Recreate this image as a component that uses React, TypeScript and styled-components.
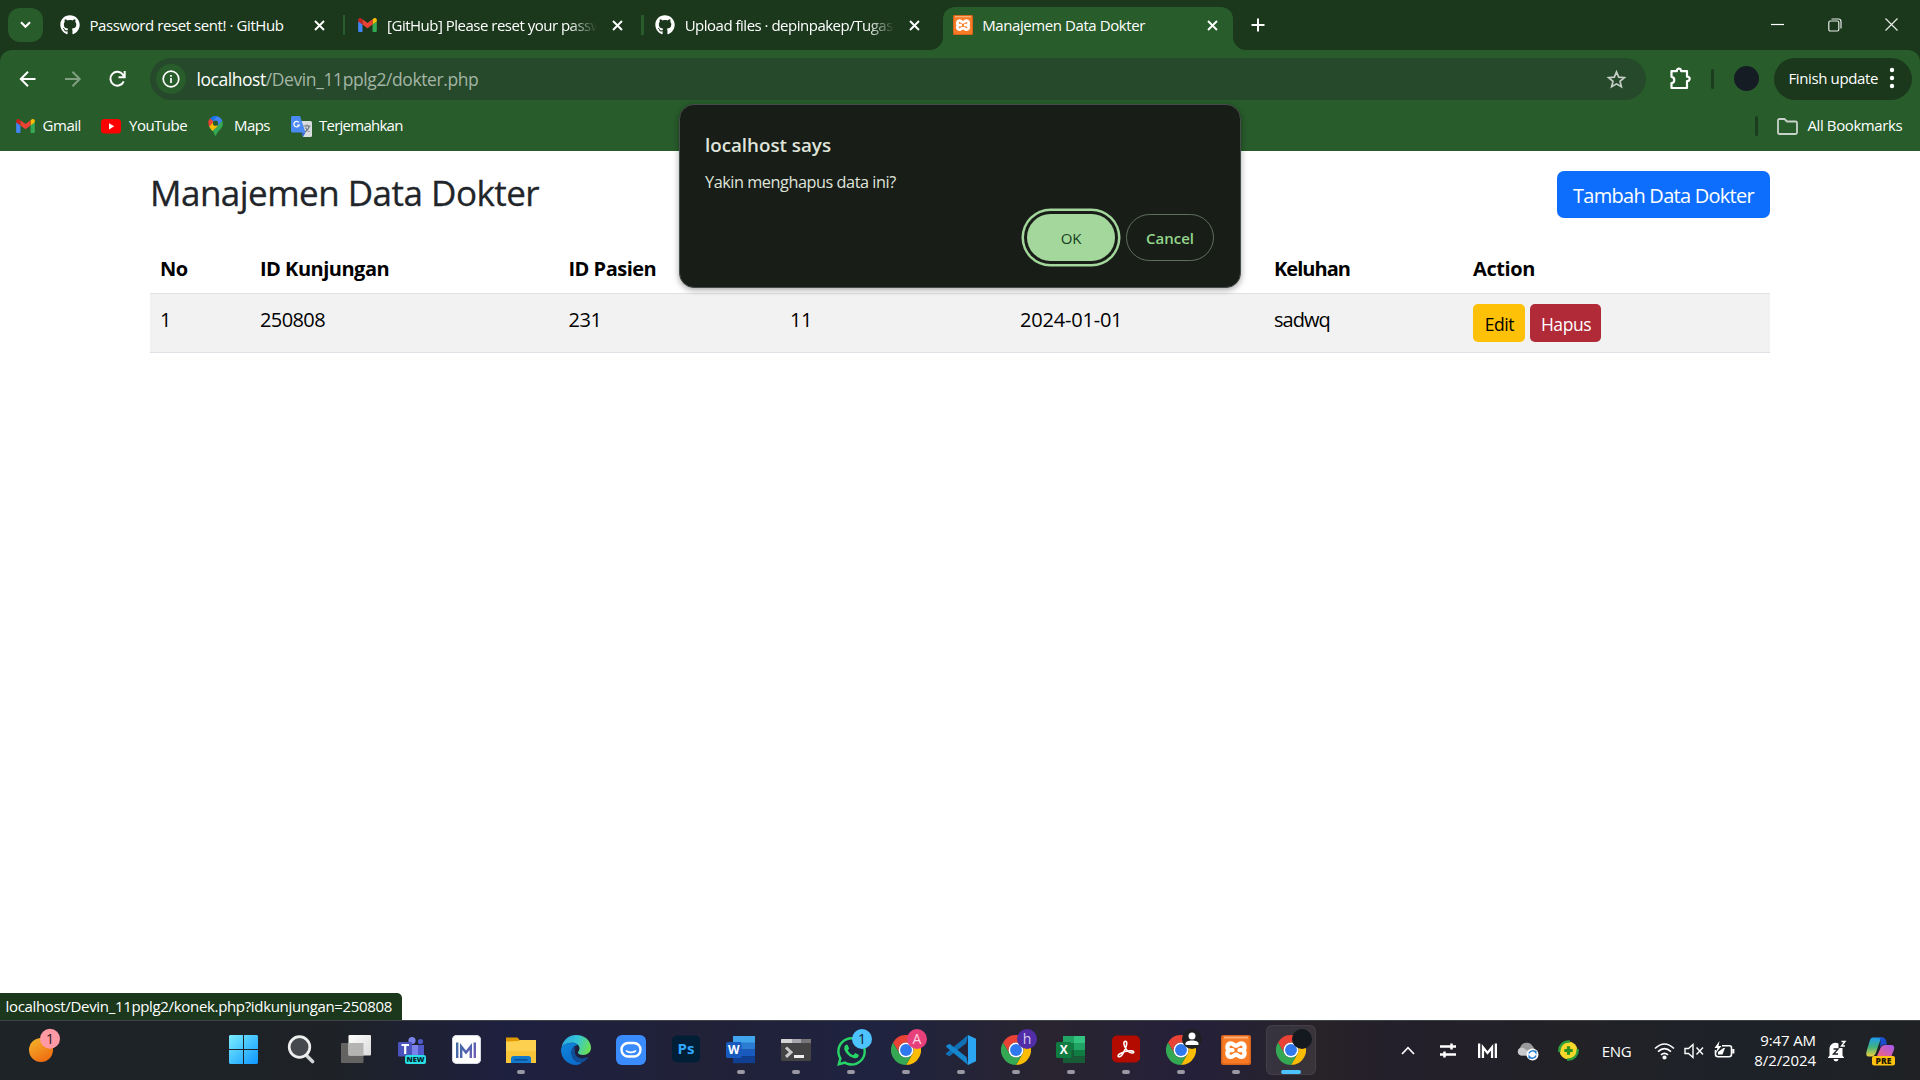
import React from "react";
import styled, { createGlobalStyle, css } from "styled-components";
import { FaGithub, FaWhatsapp } from "react-icons/fa";

const Global = createGlobalStyle`
  * { box-sizing: border-box; }
  body { margin: 0; background: #fff; overflow: hidden; }
  svg { display: block; flex: none; }
`;

const c = {
  frame: "#1b381c",
  bar: "#285c2b",
  omni: "#27492b",
  dialog: "#191d18",
  accent: "#a4d79c",
};

const Screen = styled.div`
  position: relative;
  display: flex;
  flex-direction: column;
  width: 1920px;
  height: 1080px;
  font-family: "Open Sans", "Noto Sans", sans-serif;
  background: #fff;
`;

const Text = styled.span<{ $size?: number; $track?: number; $color?: string; $weight?: number }>`
  font-size: ${(p) => p.$size ?? 15}px;
  letter-spacing: ${(p) => p.$track ?? -0.42}px;
  color: ${(p) => p.$color ?? "#fff"};
  font-weight: ${(p) => p.$weight ?? 400};
  line-height: 24px;
  white-space: pre;
  flex: none;
`;

/* ---------- tab strip ---------- */
const TabStrip = styled.div`
  display: flex;
  height: 50px;
  background: ${c.frame};
  padding-left: 8px;
`;
const TabSearch = styled.div`
  display: flex;
  align-items: center;
  justify-content: center;
  width: 35px;
  height: 34px;
  margin: 8px 7px 0 0;
  border-radius: 12px;
  background: ${c.bar};
`;
const Tab = styled.div<{ $active?: boolean }>`
  position: relative;
  display: flex;
  align-items: center;
  width: 290px;
  height: 43px;
  margin-top: 7px;
  padding: 0 15px 7px 10px;
  border-radius: 12px 12px 0 0;
  background: ${(p) => (p.$active ? c.bar : "transparent")};
  ${(p) =>
    p.$active &&
    css`
      &::before,
      &::after {
        content: "";
        position: absolute;
        bottom: 0;
        width: 13px;
        height: 13px;
      }
      &::before {
        left: -13px;
        background: radial-gradient(circle at 0 0, transparent 12.5px, ${c.bar} 13.5px);
      }
      &::after {
        right: -13px;
        background: radial-gradient(circle at 100% 0, transparent 12.5px, ${c.bar} 13.5px);
      }
    `}
`;
const Favicon = styled.div`
  display: flex;
  justify-content: center;
  width: 20px;
  margin-right: 9.500px;
  color: #fff;
`;
const TabTitle = styled.div<{ $fade?: boolean }>`
  width: 208.500px;
  height: 24px;
  margin-right: 16px;
  overflow: hidden;
  ${(p) => p.$fade && css`mask-image: linear-gradient(90deg, #000 182px, transparent 210px);`}
`;
const TabGap = styled.div<{ $line?: boolean }>`
  width: 7.6px;
  height: 20px;
  margin-top: 15px;
  background: ${(p) => (p.$line ? `linear-gradient(90deg, transparent 3px, ${c.bar} 3px, ${c.bar} 5.5px, transparent 5.5px)` : "none")};
`;
const NewTab = styled.div`
  display: flex;
  align-items: center;
  width: 20px;
  height: 50px;
  margin-left: 18px;
`;
const WindowControls = styled.div`
  display: flex;
  align-items: center;
  gap: 43.5px;
  height: 49px;
  margin-left: auto;
  padding-right: 22px;
`;

/* ---------- toolbar ---------- */
const ToolbarWrap = styled.div`
  background: ${c.frame};
`;
const Toolbar = styled.div`
  display: flex;
  align-items: center;
  height: 58px;
  padding: 0 8px 0 16px;
  border-radius: 12px 12px 0 0;
  background: ${c.bar};
`;
const NavIcons = styled.div`
  display: flex;
  gap: 21px;
  width: 134px;
`;
const Omnibox = styled.div`
  display: flex;
  align-items: center;
  width: 1496px;
  height: 42px;
  padding: 0 19px 0 6px;
  border-radius: 21px;
  background: ${c.omni};
`;
const SiteInfo = styled.div`
  display: flex;
  align-items: center;
  justify-content: center;
  width: 30px;
  height: 30px;
  margin-right: 10.5px;
  border-radius: 50%;
  background: ${c.bar};
`;
const Spacer = styled.div`
  flex: 1;
`;
const VLine = styled.div<{ $ml: number; $mr: number }>`
  width: 2.5px;
  height: 20px;
  margin: 0 ${(p) => p.$mr}px 0 ${(p) => p.$ml}px;
  border-radius: 2px;
  background: #1b3c1e;
`;
const Avatar = styled.div`
  width: 25px;
  height: 25px;
  margin-bottom: 1px;
  border-radius: 50%;
  background: #151c24;
`;
const UpdatePill = styled.div`
  display: flex;
  align-items: center;
  justify-content: space-between;
  width: 138px;
  height: 42px;
  margin-left: 15px;
  padding: 0 15px 2px;
  border-radius: 21px;
  background: ${c.frame};
`;

const BookmarkBar = styled.div`
  display: flex;
  align-items: center;
  height: 43px;
  padding: 0 18px 7px 16px;
  background: ${c.bar};
`;
const Bookmark = styled.div<{ $w: number; $gap?: number }>`
  display: flex;
  align-items: center;
  gap: ${(p) => p.$gap ?? 8}px;
  width: ${(p) => p.$w}px;
  ${Text} {
    margin-top: -2px;
  }
`;

/* ---------- page ---------- */
const Page = styled.main`
  flex: 1;
  padding: 20px 150px 0;
`;
const PageHead = styled.div`
  display: flex;
  justify-content: space-between;
  height: 73px;
`;
const Title = styled.h3`
  margin: 1px 0 0;
  font-size: 35px;
  line-height: 42px;
  font-weight: 500;
  letter-spacing: -0.52px;
  -webkit-text-stroke: 0.3px #212529;
  color: #212529;
`;
const PrimaryButton = styled.button`
  width: 213px;
  height: 47px;
  padding: 0;
  border: 0;
  border-radius: 7px;
  background: #0d6efd;
  color: #fff;
  font: 400 20px/50px "Open Sans", sans-serif;
  letter-spacing: -0.74px;
`;
const Table = styled.table`
  width: 1620px;
  table-layout: fixed;
  border-collapse: collapse;
  font-size: 20px;
  line-height: 30px;
  color: #000;
`;
const Col = styled.col<{ $w: number }>`
  width: ${(p) => p.$w}px;
`;
const Head = styled.th<{ $track?: number }>`
  height: 49px;
  padding: 10px 10px 9px;
  text-align: left;
  font-weight: 700;
  letter-spacing: ${(p) => p.$track ?? -0.5}px;
  border-bottom: 1px solid #dee2e6;
`;
const Cell = styled.td<{ $track?: number; $top?: number }>`
  height: 59px;
  padding: ${(p) => p.$top ?? 11}px 10px 8px;
  vertical-align: top;
  background: #f2f2f2;
  letter-spacing: ${(p) => p.$track ?? -0.6}px;
  border-bottom: 1px solid #dee2e6;
`;
const Actions = styled.div`
  display: flex;
  gap: 5px;
`;
const SmallButton = styled.button<{ $bg: string; $fg: string; $w: number }>`
  width: ${(p) => p.$w}px;
  height: 38px;
  padding: 0 0 0 1px;
  border: 0;
  border-radius: 5px;
  background: ${(p) => p.$bg};
  color: ${(p) => p.$fg};
  font: 400 17.5px/40px "Open Sans", sans-serif;
  letter-spacing: -0.45px;
`;

/* ---------- overlays ---------- */
const Dialog = styled.div`
  position: absolute;
  left: 679px;
  top: 104px;
  width: 562px;
  height: 184px;
  padding: 28px 26px 26px 25px;
  display: flex;
  flex-direction: column;
  border: 1px solid #454c4c;
  border-radius: 15px;
  background: ${c.dialog};
  box-shadow: 0 2px 6px rgba(0, 0, 0, 0.35);
`;
const DialogMessage = styled.div`
  margin-top: 13px;
  height: 24px;
`;
const DialogButtons = styled.div`
  display: flex;
  justify-content: flex-end;
  gap: 11px;
  margin-top: 20px;
`;
const PillButton = styled.button<{ $primary?: boolean }>`
  width: 88px;
  height: 47px;
  padding: 0;
  border-radius: 24px;
  font: ${(p) => (p.$primary ? 500 : 600)} 15px "Open Sans", sans-serif;
  letter-spacing: ${(p) => (p.$primary ? -0.2 : 0)}px;
  border: ${(p) => (p.$primary ? "0" : "1px solid #60705e")};
  background: ${(p) => (p.$primary ? c.accent : "transparent")};
  color: ${(p) => (p.$primary ? "#17401d" : "#93d68c")};
  ${(p) => p.$primary && css`box-shadow: 0 0 0 3px ${c.dialog}, 0 0 0 5.5px ${c.accent};`}
`;
const StatusBubble = styled.div`
  position: absolute;
  left: 0;
  top: 993px;
  width: 402px;
  height: 27px;
  padding: 1px 0 0 5.5px;
  border-radius: 0 5px 0 0;
  background: ${c.frame};
`;

/* ---------- taskbar ---------- */
const Taskbar = styled.footer`
  display: flex;
  height: 60px;
  border-top: 1px solid #3f4448;
  background: linear-gradient(90deg, #1e2327 0, #1e2226 330px, #1e2040 510px, #212138 700px, #1f2340 880px, #29242f 1050px, #25203a 1190px, #282328 1320px, #231f2b 1400px, #222126 1560px, #1d2228 1740px, #1f2124 1920px);
`;
const Weather = styled.div`
  width: 216px;
  padding: 7px 0 0 28px;
`;
const TaskItem = styled.div<{ $active?: boolean; $first?: boolean }>`
  position: relative;
  display: flex;
  justify-content: center;
  width: 50px;
  height: 50px;
  margin: 4px ${(p) => (p.$first ? 5 : 2.5)}px 0 2.5px;
  padding-top: 10px;
  border-radius: 6px;
  ${(p) => p.$active && css`background: rgba(255, 255, 255, 0.08); box-shadow: inset 0 0 0 1px rgba(255, 255, 255, 0.06);`}
`;
const Indicator = styled.i<{ $active?: boolean }>`
  position: absolute;
  bottom: 1px;
  width: ${(p) => (p.$active ? 20 : 8)}px;
  height: 4px;
  border-radius: 2px;
  background: ${(p) => (p.$active ? "#4cc2ff" : "#9a98a2")};
`;
const Badge = styled.span<{ $bg: string; $fg: string }>`
  position: absolute;
  left: 26px;
  top: 4px;
  width: 20px;
  height: 20px;
  border-radius: 50%;
  background: ${(p) => p.$bg};
  color: ${(p) => p.$fg};
  font-size: 14px;
  line-height: 20px;
  text-align: center;
`;
const Tray = styled.div`
  display: flex;
  align-items: center;
  margin-left: auto;
  padding-right: 24px;
`;
const TraySlot = styled.div<{ $w: number; $mr?: number }>`
  display: flex;
  justify-content: center;
  width: ${(p) => p.$w}px;
  margin-right: ${(p) => p.$mr ?? 0}px;
`;
const Clock = styled.div`
  width: 80.5px;
  margin-top: -2px;
  text-align: right;
  color: #fff;
  font-size: 15px;
  line-height: 20px;
  letter-spacing: -0.1px;
`;

/* ---------- drawings ---------- */
const Close = () => (
  <svg width="11" height="11" viewBox="0 0 11 11" stroke="#fff" strokeWidth="1.9"><path d="M1 1l9 9M10 1l-9 9" /></svg>
);
const Gmail = () => (
  <svg width="19" height="14" viewBox="0 0 24 18">
    <path fill="#4285f4" d="M0 4v12.400C0 17.300.7 18 1.600 18H5.500V8z" />
    <path fill="#34a853" d="M24 4v12.400c0 .9-.7 1.600-1.600 1.600H18.500V8z" />
    <path fill="#c5221f" d="M0 4.200V2.500C0 .4 2.400-.8 4.100.5l1.400 1V8.300z" />
    <path fill="#fbbc04" d="M24 4.200V2.500c0-2.100-2.400-3.300-4.100-2l-1.400 1v6.800z" />
    <path fill="#ea4335" d="M5.500 8.300V1.500L12 6.400l6.500-4.900v6.800L12 13.200z" />
  </svg>
);
const XamppIcon = ({ s }: { s: number }) => (
  <svg width={s} height={s} viewBox="0 0 30 30">
    <rect width="30" height="30" rx="2" fill="#d9651c" />
    <rect x="1.500" y="1.500" width="27" height="27" rx="2" fill="#f97b25" />
    <path d="M3 2.500h24" stroke="#fbb27c" strokeWidth="1.800" />
    <g fill="none" stroke="#fff" strokeWidth="4.300" strokeLinejoin="round" strokeLinecap="round">
      <path d="M11.500 15.200H7.800c-2-1.600-2-6.200 1.500-6.700 3-.4 3.800 2.300 5.700 2.300s2.700-2.700 5.700-2.300c3.500.5 3.500 5.100 1.500 6.700 2 1.600 2 6.200-1.500 6.700-3 .4-3.800-2.300-5.700-2.300s-2.700 2.700-5.700 2.300c-3.500-.5-3.500-5.100-1.500-6.700" />
      <path d="M18.500 15.200h3.700" />
    </g>
  </svg>
);
const Chrome = () => (
  <svg width="30" height="30" viewBox="0 0 48 48">
    <path fill="#ea4335" d="M3.200 12A24 24 0 0 1 44.800 12H24a12 12 0 0 0-10.400 18z" />
    <path fill="#fbbc04" d="M44.800 12A24 24 0 0 1 24 48l10.400-18A12 12 0 0 0 24 12z" />
    <path fill="#34a853" d="M24 48A24 24 0 0 1 3.200 12l10.400 18a12 12 0 0 0 20.800 0z" />
    <circle cx="24" cy="24" r="12" fill="#fff" />
    <circle cx="24" cy="24" r="9.500" fill="#2f78ee" />
  </svg>
);
const WordIcon = () => (
  <svg width="30" height="30" viewBox="0 0 30 30">
    {["#41a5ee", "#2b7cd3", "#185abd", "#103f91"].map((f, i) => <rect key={f} x="7" y={1 + i * 6.75} width="22" height="6.900" fill={f} />)}
    <rect x="0" y="7" width="15.500" height="16" rx="1.500" fill="#185abd" />
    <text x="7.700" y="19.300" fill="#fff" fontSize="12" fontWeight="700" textAnchor="middle" fontFamily="Open Sans">W</text>
  </svg>
);
const ExcelIcon = () => (
  <svg width="30" height="30" viewBox="0 0 30 30">
    <path fill="#21a366" d="M7 1h11v7H7z" /><path fill="#33c481" d="M18 1h11v7H18z" />
    <path fill="#107c41" d="M7 8h11v7H7z" /><path fill="#21a366" d="M18 8h11v7H18z" />
    <path fill="#185c37" d="M7 15h11v13H7z" /><path fill="#107c41" d="M18 15h11v6.500H18z" /><path fill="#185c37" d="M18 21.500h11V28H18z" />
    <rect y="7" width="15.500" height="16" rx="1.500" fill="#107c41" />
    <text x="7.700" y="19.300" fill="#fff" fontSize="12" fontWeight="700" textAnchor="middle" fontFamily="Open Sans">X</text>
  </svg>
);
const MLogo = ({ stroke, w }: { stroke: string; w: number }) => (
  <svg width={w} height={w} viewBox="0 0 20 20" fill="none" stroke={stroke} strokeWidth="2.400">
    <defs>
      <linearGradient id="mlogo" gradientUnits="userSpaceOnUse" x1="0" y1="2" x2="20" y2="18"><stop stopColor="#3f6f9f" /><stop offset=".5" stopColor="#4d62b0" /><stop offset="1" stopColor="#7a5fb5" /></linearGradient>
    </defs>
    <path d="M1.200 2.500v15.500M18.800 2.500v15.500M5.200 18V6.500l4.800 6 4.800-6V18" />
  </svg>
);
const MTile = styled.div`
  display: flex;
  align-items: center;
  justify-content: center;
  width: 29px;
  height: 29px;
  border-radius: 5px;
  background: #fff;
  box-shadow: inset 0 0 0 1px #d5d9e2;
`;

const items: { icon: React.ReactNode; run?: boolean; active?: boolean; badge?: React.ReactNode }[] = [
  { icon: (
    <svg width="29" height="29" viewBox="0 0 29 29">
      <defs><linearGradient id="win" x1="0" y1="0" x2="1" y2="1"><stop stopColor="#7ceeff" /><stop offset="1" stopColor="#0d96ff" /></linearGradient></defs>
      <path fill="url(#win)" d="M1 0h13v14H0V1zM15 0h13l1 1v13H15zM0 15h14v14H1l-1-1zM15 15h14v13l-1 1H15z" />
    </svg>) },
  { icon: (
    <svg width="28" height="30" viewBox="0 0 28 30">
      <path d="M19 20l6.500 6.500" stroke="#d5d6d8" strokeWidth="3.600" strokeLinecap="round" />
      <circle cx="12.500" cy="12" r="10.300" fill="#46494d" stroke="#eeeeef" strokeWidth="2.700" />
    </svg>) },
  { icon: (
    <svg width="30" height="29" viewBox="0 0 30 29">
      <defs><linearGradient id="tv" x2="1" y2="1"><stop stopColor="#fff" /><stop offset="1" stopColor="#dadada" /></linearGradient></defs>
      <rect y="8" width="22.500" height="20" rx="1" fill="#636362" /><rect x="7.500" y="0" width="22.500" height="20.500" rx="1" fill="url(#tv)" />
      <path fill="#b4b4b3" d="M7.500 8h15v12.500h-15z" />
    </svg>) },
  { icon: (
    <svg width="30" height="30" viewBox="0 0 30 30">
      <circle cx="16" cy="5.500" r="3.600" fill="#7b83eb" /><circle cx="24.500" cy="6.500" r="2.600" fill="#5059c9" />
      <rect x="15" y="10" width="8" height="14" fill="#7b83eb" /><rect x="22" y="10" width="6" height="11" fill="#5059c9" />
      <rect x="2" y="7" width="14" height="14.500" rx="1" fill="#4b53bc" />
      <path d="M5.500 10h7.500M9.200 10v9" stroke="#fff" strokeWidth="2.200" />
      <rect x="9" y="20" width="21" height="9" rx="2" fill="#29e0e6" />
      <text x="19.500" y="27.300" fontSize="7.500" fontWeight="800" textAnchor="middle" fill="#06262c" fontFamily="Open Sans">NEW</text>
    </svg>) },
  { icon: <MTile><MLogo stroke="url(#mlogo)" w={20} /></MTile> },
  { run: true, icon: (
    <svg width="30" height="30" viewBox="0 0 30 30">
      <path fill="#e09a00" d="M0 2.500h11.500l2.500 3V10H0z" /><path fill="#fdd04f" d="M0 6.500l12-.5 2-1h16V28H0z" />
      <path fill="#fbc53a" d="M0 16h30v12H0z" />
      <path fill="#1379cc" d="M5 28v-4.500q0-2.500 2.500-2.500h15q2.500 0 2.500 2.500V28z" /><path d="M8.500 24.800h13" stroke="#0a4f93" strokeWidth="1.500" />
    </svg>) },
  { icon: (
    <svg width="30" height="30" viewBox="0 0 30 30">
      <defs>
        <linearGradient id="eg" x1="0" y1=".2" x2="1" y2=".5"><stop stopColor="#2aa5e0" /><stop offset=".5" stopColor="#35c6d8" /><stop offset="1" stopColor="#69df55" /></linearGradient>
        <linearGradient id="eb" x2=".6" y2="1"><stop stopColor="#0f86dc" /><stop offset="1" stopColor="#0b6cca" /></linearGradient>
      </defs>
      <path fill="url(#eg)" d="M.5 13.500C1 6 7 0 15 0c9 0 15 6 15 12.800 0 4.500-3.600 7.200-7.800 7.200-3.500 0-5.200-1.300-5.200-2.500 0-1 1.500-1.400 1.500-4 0-3-3-5.700-7-5.700C6 7.800 1.500 10 .5 13.500z" />
      <path fill="url(#eb)" d="M0 15C0 11 5 7.800 11 7.800c2.500 0 4.600.9 6 2.200-4 .3-6.500 3.700-6.500 7.500 0 6 4.500 11 11 9.500-2 2-4 3-6.500 3C7 30 0 23.500 0 15z" />
      <path fill="#104f97" d="M13.500 11.800C9.500 14 10 21 13 24.500c4 4.500 10.500 3.200 14-1.500.5-.8 0-1-.6-.7-5.400 2.700-12.400.2-12.600-5.300 0-1.500.3-3-.3-5.200z" />
    </svg>) },
  { icon: (
    <svg width="30" height="30" viewBox="0 0 30 30">
      <rect width="30" height="30" rx="6" fill="#3a8bfb" /><rect x="5.500" y="8" width="19" height="13.500" rx="6.700" fill="none" stroke="#fff" strokeWidth="2.400" />
      <path d="M10.500 16q4.500 2.800 9 0" fill="none" stroke="#fff" strokeWidth="1.600" strokeLinecap="round" />
    </svg>) },
  { icon: (
    <svg width="30" height="30" viewBox="0 0 30 30">
      <rect x="1" y=".5" width="28" height="27" rx="5" fill="#001e36" /><text x="15" y="18.500" fontSize="15" fontWeight="700" textAnchor="middle" fill="#31a8ff" fontFamily="Open Sans">Ps</text>
    </svg>) },
  { run: true, icon: <WordIcon /> },
  { run: true, icon: (
    <svg width="30" height="30" viewBox="0 0 30 30">
      <rect y="4" width="30" height="22" rx="1.500" fill="#444" /><path fill="#a9a7ab" d="M1 4h28q1 0 1 1v3H0V5q0-1 1-1z" /><path fill="#d4d3d5" d="M1 4h10v4H0V5q0-1 1-1z" /><path fill="#77757a" d="M20 4h9q1 0 1 1v3H20z" />
      <path d="M5 12.500l5 4.700-5 4.700" fill="none" stroke="#c9c9c9" strokeWidth="3" /><path d="M13 21.500h10" stroke="#eee" strokeWidth="3" />
    </svg>) },
  { run: true, icon: <FaWhatsapp size={33} color="#27d466" />, badge: <Badge $bg="#4cc2ff" $fg="#10222e">1</Badge> },
  { run: true, icon: <Chrome />, badge: <Badge $bg="#e8407a" $fg="#fbd5e2">A</Badge> },
  { run: true, icon: (
    <svg width="30" height="30" viewBox="0 0 30 30">
      <path fill="#1070b3" d="M22 0l-1.500 8L3.500 21.200 0 19.400v-1.200z" />
      <path fill="#1687cf" d="M22 30l-1.500-8L3.500 8.700.3 10.600v1.300z" />
      <path fill="#2ba5f2" d="M22 0l8 3.800v22.400L22 30V0z" />
    </svg>) },
  { run: true, icon: <Chrome />, badge: <Badge $bg="#512da8" $fg="#d8cef0">h</Badge> },
  { run: true, icon: <ExcelIcon /> },
  { run: true, icon: (
    <svg width="30" height="30" viewBox="0 0 30 30">
      <rect x="1" y=".5" width="28" height="27" rx="5" fill="#b30b00" />
      <path fill="none" stroke="#fff" strokeWidth="1.600" d="M13.800 6.500c2-.8 2.500 1.500 1.300 5C13.500 16 10.500 21.500 8.500 21.800c-2 .2-2-1.700.5-3.100 3.500-2 9-3.200 12-2.800 2.500.4 2.200 2.400 0 2.100-3-.3-6-3.500-7.300-6.500-.8-2-1.300-4.300.1-5z" />
    </svg>) },
  { run: true, icon: <Chrome />, badge: (
    <Badge $bg="#1f2023" $fg="#fff"><svg width="20" height="20" viewBox="0 0 20 20" fill="#fff"><circle cx="10" cy="7" r="3.500" /><path d="M3.500 16v-1.500c0-2 3-3 6.500-3s6.500 1 6.500 3V16z" /></svg></Badge>) },
  { run: true, icon: <XamppIcon s={30} /> },
  { run: true, active: true, icon: <Chrome />, badge: <Badge $bg="#14191f" $fg="#fff" /> },
];

const tabs = [
  { icon: <FaGithub size={20} />, title: "Password reset sent! · GitHub", line: true },
  { icon: <Gmail />, title: "[GitHub] Please reset your passw", fade: true, line: true },
  { icon: <FaGithub size={20} />, title: "Upload files · depinpakep/Tugas", fade: true },
  { icon: <XamppIcon s={20} />, title: "Manajemen Data Dokter", active: true },
];

const columns = [100, 308.5, 221.5, 230, 254, 199, 307];

export default function App() {
  return (
    <Screen>
      <Global />
      <TabStrip>
        <TabSearch>
          <svg width="11" height="8" viewBox="0 0 11 8" fill="none" stroke="#fff" strokeWidth="2.200"><path d="M1 1.200l4.500 4.500L10 1.200" /></svg>
        </TabSearch>
        {tabs.map((t, i) => (
          <React.Fragment key={i}>
            <Tab $active={t.active}>
              <Favicon>{t.icon}</Favicon>
              <TabTitle $fade={t.fade}><Text $track={t.fade ? -0.5 : -0.42}>{t.title}</Text></TabTitle>
              <Close />
            </Tab>
            {!t.active && <TabGap $line={t.line} />}
          </React.Fragment>
        ))}
        <NewTab>
          <svg width="14" height="14" viewBox="0 0 14 14" stroke="#fff" strokeWidth="2"><path d="M7 .5v13M.5 7h13" /></svg>
        </NewTab>
        <WindowControls>
          <svg width="13" height="13" viewBox="0 0 13 13" stroke="#fff" strokeWidth="1.200"><path d="M0 6.500h13" /></svg>
          <svg width="14" height="14" viewBox="0 0 14 14" fill="none" stroke="#e8ece8" strokeWidth="1.200"><rect x=".8" y="3" width="10" height="10" rx="1.500" /><path d="M3.500 1h7Q13 1 13 3.500v7" /></svg>
          <svg width="13" height="13" viewBox="0 0 13 13" stroke="#e8ece8" strokeWidth="1.200"><path d="M.5.5l12 12M12.500.5l-12 12" /></svg>
        </WindowControls>
      </TabStrip>

      <ToolbarWrap>
        <Toolbar>
          <NavIcons>
            <svg width="24" height="24" viewBox="0 0 24 24" fill="none" stroke="#fff" strokeWidth="2"><path d="M19.500 12H5M12 4.800L4.800 12l7.200 7.200" /></svg>
            <svg width="24" height="24" viewBox="0 0 24 24" fill="none" stroke="#80a081" strokeWidth="2"><path d="M4 12H18.500M11.500 4.800l7.200 7.200-7.200 7.200" /></svg>
            <svg width="24" height="24" viewBox="0 0 24 24" fill="none" stroke="#fff" strokeWidth="2"><path d="M17.700 14.300A6.900 6.900 0 1 1 17 7.800L18.500 9.800M18.700 4v6.300H12.500" /></svg>
          </NavIcons>
          <Omnibox>
            <SiteInfo>
              <svg width="18" height="18" viewBox="0 0 18 18" fill="none" stroke="#fff" strokeWidth="1.700"><circle cx="9" cy="9" r="7.800" /><path d="M9 8v5M9 5v1.800" /></svg>
            </SiteInfo>
            <Text $size={17.5} $track={-0.45}>localhost</Text>
            <Text $size={17.5} $track={-0.4} $color="#a3b5a5">/Devin_11pplg2/dokter.php</Text>
            <Spacer />
            <svg width="21" height="21" viewBox="0 0 24 24" fill="none" stroke="#c6cfc7" strokeWidth="1.900"><path d="M12 3.300l2.500 6 6.500.5-5 4.200 1.600 6.300L12 17l-5.600 3.300L8 14 3 9.800l6.500-.5z" /></svg>
          </Omnibox>
          <svg width="68" height="28" viewBox="0 0 68 28" fill="none" stroke="#fff" strokeWidth="2.200">
            <path strokeLinejoin="round" d="M25.500 6.200h5.300c-.3-3.400 4.600-3.400 4.300 0H41v5.500c3.600-.2 3.600 4.500 0 4.300V23H25.500v-4.800c3.700-.4 3.700-6 0-6.400z" />
          </svg>
          <VLine $ml={-3} $mr={20} />
          <Avatar />
          <UpdatePill>
            <Text $track={-0.38}>Finish update</Text>
            <svg width="10" height="22" viewBox="0 0 10 22" fill="#fff"><circle cx="5" cy="3" r="2.200" /><circle cx="5" cy="11" r="2.200" /><circle cx="5" cy="19" r="2.200" /></svg>
          </UpdatePill>
        </Toolbar>
      </ToolbarWrap>

      <BookmarkBar>
        <Bookmark $w={85} $gap={7.5}><Gmail /><Text $track={-0.45}>Gmail</Text></Bookmark>
        <Bookmark $w={107}>
          <svg width="20" height="15" viewBox="0 0 20 15"><rect width="20" height="14.500" rx="3.500" fill="#f00" /><path fill="#fff" d="M8 4.200l5.200 3.100L8 10.400z" /></svg>
          <Text $track={-0.5}>YouTube</Text>
        </Bookmark>
        <Bookmark $w={83} $gap={11}>
          <svg width="15" height="20" viewBox="0 0 15 20">
            <path fill="#34a853" d="M.8 9.800L5 12l9.300-7.300c1.200 3.500.5 5.700-1.800 8.300C10 15.700 9 17 8.300 19c-.3 1-1.300 1-1.600 0C6 16 4.500 15 2.800 13 1.800 11.800 1 10.800.8 9.800z" />
            <path fill="#4285f4" d="M5 .6A7.300 7.300 0 0 1 14.300 4.700L9 10.500 4 4z" /><path fill="#1a73e8" d="M2 2.500A7 7 0 0 1 9 .2L5 5z" /><path fill="#ea4335" d="M2 2.500L6 6 1.500 11C0 8-.3 5 2 2.500z" />
            <path fill="#fbbc04" d="M1.300 10.700L5.300 6l4.500 4-5.500 5z" /><circle cx="7.500" cy="7.200" r="2.600" fill="#285c2b" />
          </svg>
          <Text $track={-0.55}>Maps</Text>
        </Bookmark>
        <Bookmark $w={120} $gap={7}>
          <svg width="21" height="21" viewBox="0 0 21 21">
            <path fill="#d9dde0" d="M9 5h10.500q1.500 0 1.500 1.500v13q0 1.500-1.500 1.500H12z" /><path fill="#4a8af4" d="M1.500 0H9l5.500 16.500H1.500Q0 16.500 0 15V1.500Q0 0 1.500 0z" /><path fill="#3367d6" d="M10.500 16.500h4L12 21z" />
            <path d="M12.500 10h7M16 8.500V10m2.200 0c-.5 3-2.500 5-4.200 6m.5-4.500c.8 2 2.500 3.500 4 4.300" fill="none" stroke="#6d757c" strokeWidth="1.200" />
            <path d="M8 6.500A2.800 2.800 0 1 0 8.400 9H6" fill="none" stroke="#fff" strokeWidth="1.200" />
          </svg>
          <Text $track={-0.75}>Terjemahkan</Text>
        </Bookmark>
        <Spacer />
        <VLine $ml={0} $mr={19.5} />
        <Bookmark $w={125} $gap={9.5}>
          <svg width="21" height="17" viewBox="0 0 21 17" fill="none" stroke="#c9d2ca" strokeWidth="1.800"><path strokeLinejoin="round" d="M1 2.500Q1 1 2.500 1h5l2.500 2.500h8.500Q20 3.500 20 5v9.500q0 1.500-1.500 1.500h-16Q1 16 1 14.500z" /></svg>
          <Text $track={-0.4}>All Bookmarks</Text>
        </Bookmark>
      </BookmarkBar>

      <Page>
        <PageHead>
          <Title>Manajemen Data Dokter</Title>
          <PrimaryButton>Tambah Data Dokter</PrimaryButton>
        </PageHead>
        <Table>
          <colgroup>
            {columns.map((w, i) => <Col key={i} $w={w} />)}
          </colgroup>
          <thead>
            <tr><Head>No</Head><Head>ID Kunjungan</Head><Head>ID Pasien</Head><Head /><Head /><Head $track={-0.95}>Keluhan</Head><Head $track={-0.4}>Action</Head></tr>
          </thead>
          <tbody>
            <tr>
              <Cell>1</Cell><Cell>250808</Cell><Cell $track={-0.45}>231</Cell><Cell $track={-0.45}>11</Cell><Cell $track={-0.2}>2024-01-01</Cell><Cell $track={-0.95}>sadwq</Cell>
              <Cell $top={10}>
                <Actions>
                  <SmallButton $bg="#ffc107" $fg="#000" $w={52}>Edit</SmallButton>
                  <SmallButton $bg="#b02a37" $fg="#fff" $w={71}>Hapus</SmallButton>
                </Actions>
              </Cell>
            </tr>
          </tbody>
        </Table>
      </Page>

      <Taskbar>
        <Weather>
          <svg width="36" height="38" viewBox="0 0 36 38">
            <defs><linearGradient id="sun" x1=".1" x2=".7" y2="1"><stop stopColor="#f3b52c" /><stop offset="1" stopColor="#f06a10" /></linearGradient></defs>
            <circle cx="13" cy="22" r="12" fill="url(#sun)" /><circle cx="22" cy="10.800" r="10" fill="#ff99a4" />
            <text x="22" y="16" fontSize="14" textAnchor="middle" fill="#29181a" fontFamily="Open Sans">1</text>
          </svg>
        </Weather>
        {items.map((it, i) => (
          <TaskItem key={i} $active={it.active} $first={i === 0}>
            {it.icon}
            {it.badge}
            {it.run && <Indicator $active={it.active} />}
          </TaskItem>
        ))}
        <Tray>
          <TraySlot $w={40}><svg width="14" height="9" viewBox="0 0 14 9" fill="none" stroke="#fff" strokeWidth="1.700"><path d="M1 8l6-6.300L13 8" /></svg></TraySlot>
          <TraySlot $w={39}>
            <svg width="18" height="17" viewBox="0 0 18 17" stroke="#fff" strokeWidth="2.500"><path d="M1 4.500h16M1 12.500h16" /><path d="M12.500 1.500v6M5.500 9.500v6" /></svg>
          </TraySlot>
          <TraySlot $w={41}><MLogo stroke="#fff" w={19} /></TraySlot>
          <TraySlot $w={40}>
            <svg width="22" height="20" viewBox="0 0 22 20">
              <path fill="#9a9a9d" d="M4 14.500A4 4 0 0 1 3 7 7 7 0 0 1 16 5.500l3 5-6 4z" /><path fill="#c9c9cc" d="M4 14.500a4 4 0 0 1-.5-7.700C7 6 9 8 14 14.500z" />
              <circle cx="15.500" cy="13.500" r="6" fill="#fff" /><path d="M12 12.500a3.800 3.800 0 0 1 6.800-1v-2M19 14.500a3.800 3.800 0 0 1-6.800 1v2" fill="none" stroke="#1b7bd1" strokeWidth="1.400" />
            </svg>
          </TraySlot>
          <TraySlot $w={41}>
            <svg width="21" height="21" viewBox="0 0 21 21"><circle cx="10.500" cy="10.500" r="9" fill="#f8d92b" /><path d="M1.500 12A9 9 0 0 1 12 1.600M19.500 9A9 9 0 0 1 9 19.400" fill="none" stroke="#2e9e3e" strokeWidth="2.400" /><path d="M10.500 6.300v8.400M6.300 10.500h8.400" stroke="#2b8f22" strokeWidth="3.200" /></svg>
          </TraySlot>
          <TraySlot $w={55} $mr={9.5}><Text $track={-0.4}>ENG</Text></TraySlot>
          <svg width="82" height="20" viewBox="0 0 82 20" fill="none" stroke="#fff" strokeWidth="1.600">
            <path d="M1 7.500Q10.500-1.500 20 7.500M4 10.700q6.500-6 13 0M7 13.900q3.500-3.200 7 0" /><circle cx="10.500" cy="16.500" r="1.300" fill="#fff" />
            <path d="M31 7.500h3.500l4.500-4v13l-4.500-4H31zM42.500 6.500l6.500 7M49 6.500l-6.500 7" strokeWidth="1.400" />
            <path d="M68 4.800h7.500q2 0 2 2v6.500q0 2.500-2.500 2.500H64q-2.500 0-2.500-2.500V9" /><path d="M79.300 8v4.500" strokeWidth="2.200" />
            <path fill="#fff" stroke="none" d="M65.500 0l-5 7h3l-2 5.500 6-7.500h-3z" /><path fill="#fff" stroke="none" d="M64 13.500V11l5.500-4h1.500l-2.500 6.500z" />
          </svg>
          <Clock>9:47 AM<br />8/2/2024</Clock>
          <TraySlot $w={41}>
            <svg width="20" height="22" viewBox="0 0 20 22">
              <path fill="#fff" d="M2.500 8.500a6 6 0 0 1 9-5V8h4v7.500l1.500 2V18H1v-.5l1.500-2zM6.500 19h5a2.500 2.500 0 0 1-5 0z" />
              <path d="M6.500 9h4.500l-4.500 5H11" stroke="#1f2226" strokeWidth="1.400" fill="none" /><path d="M14.500 1.500H18l-3.500 4.500H18" stroke="#fff" strokeWidth="1.400" fill="none" />
            </svg>
          </TraySlot>
          <svg width="39" height="32" viewBox="0 0 39 32">
            <defs>
              <linearGradient id="cpa" x2="0" y2="1"><stop stopColor="#1f9bf0" /><stop offset=".5" stopColor="#3fb27f" /><stop offset="1" stopColor="#f2d03c" /></linearGradient>
              <linearGradient id="cpb" x1="1" x2="0" y2="1"><stop stopColor="#a259f0" /><stop offset="1" stopColor="#f2637e" /></linearGradient>
            </defs>
            <path fill="url(#cpa)" d="M16 2.500h11q-3 0-4.500 5l-3.500 10q-1.500 4-4.500 4h-3q-3 0-2-5l3-10q1-4 3.500-4z" />
            <path fill="#1b4fd0" d="M21 2.500h4.500q2.500 0 3.500 3l1 4h-3q-2.500 0-4 3l.5-6q0-3.500-2.500-4z" />
            <path fill="url(#cpb)" d="M28 10h6.500q3.500 0 2.500 4.500L34.500 21H20l3.500-8q1.500-3 4.500-3z" />
            <rect x="15" y="21" width="23" height="9.500" rx="2" fill="#ffc20e" />
            <text x="26.500" y="29" fontSize="8.500" fontWeight="800" textAnchor="middle" fill="#231a00" fontFamily="Open Sans">PRE</text>
          </svg>
        </Tray>
      </Taskbar>

      <StatusBubble><Text $track={-0.33}>localhost/Devin_11pplg2/konek.php?idkunjungan=250808</Text></StatusBubble>
      <Dialog>
        <Text $size={18.75} $weight={600} $track={0} $color="#dfe4da">localhost says</Text>
        <DialogMessage><Text $size={16.25} $track={-0.45} $color="#dfe4da">Yakin menghapus data ini?</Text></DialogMessage>
        <DialogButtons>
          <PillButton $primary>OK</PillButton>
          <PillButton>Cancel</PillButton>
        </DialogButtons>
      </Dialog>
    </Screen>
  );
}
